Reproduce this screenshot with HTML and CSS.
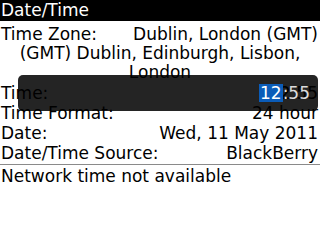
FILE: index.html
```html
<!DOCTYPE html>
<html>
<head>
<meta charset="utf-8">
<link rel="stylesheet" href="styles.css">
</head>
<body>
<div class="screen">
  <div class="title">Date/Time</div>
  <div class="zone">
    <div class="row"><span>Time Zone:</span><span>Dublin, London (GMT)</span></div>
    <div class="center">(GMT) Dublin, Edinburgh, Lisbon,</div>
    <div class="center">London</div>
  </div>
  <div class="row field first"><span>Time:</span><span>12:55</span></div>
  <div class="row field"><span>Time Format:</span><span>24 hour</span></div>
  <div class="row field"><span>Date:</span><span>Wed, 11 May 2011</span></div>
  <div class="row field"><span>Date/Time Source:</span><span>BlackBerry</span></div>
  <div class="sep"></div>
  <div class="note">Network time not available</div>
  <div class="popup"><span class="sel">12</span><span class="rest">:55</span></div>
</div>
</body>
</html>
```

FILE: styles.css
```css
html, body {
  margin: 0;
  padding: 0;
  background: #fff;
}
.screen {
  position: relative;
  width: 320px;
  height: 240px;
  overflow: hidden;
  font-family: "DejaVu Sans", sans-serif;
  font-size: 17px;
  color: #000;
  background: #fff;
}
.title {
  height: 21px;
  background: #000;
  color: #fff;
  font-size: 17px;
  line-height: 21px;
  padding-left: 1px;
}
.zone {
  margin-top: 4px;
  line-height: 19px;
}
.row {
  display: flex;
  justify-content: space-between;
  padding: 0 2px 0 1px;
  line-height: 19px;
}
.center {
  text-align: center;
}
.field {
  padding-top: 1px;
}
.field.first {
  padding-top: 2px;
}
.sep {
  height: 1px;
  background: #8a8a8a;
  margin-top: 1px;
}
.note {
  line-height: 19px;
  padding-left: 1px;
  margin-top: 2px;
}
.popup {
  position: absolute;
  left: 18px;
  top: 75px;
  width: 300px;
  height: 36px;
  border-radius: 5px;
  background: rgba(0, 0, 0, 0.86);
  display: flex;
  align-items: center;
  justify-content: flex-end;
  padding-right: 8px;
  box-sizing: border-box;
  line-height: 18px;
}
.sel {
  background: #0b5cb8;
  color: #fff;
  padding: 0 1px;
}
.rest {
  color: #dcdcdc;
}
```
